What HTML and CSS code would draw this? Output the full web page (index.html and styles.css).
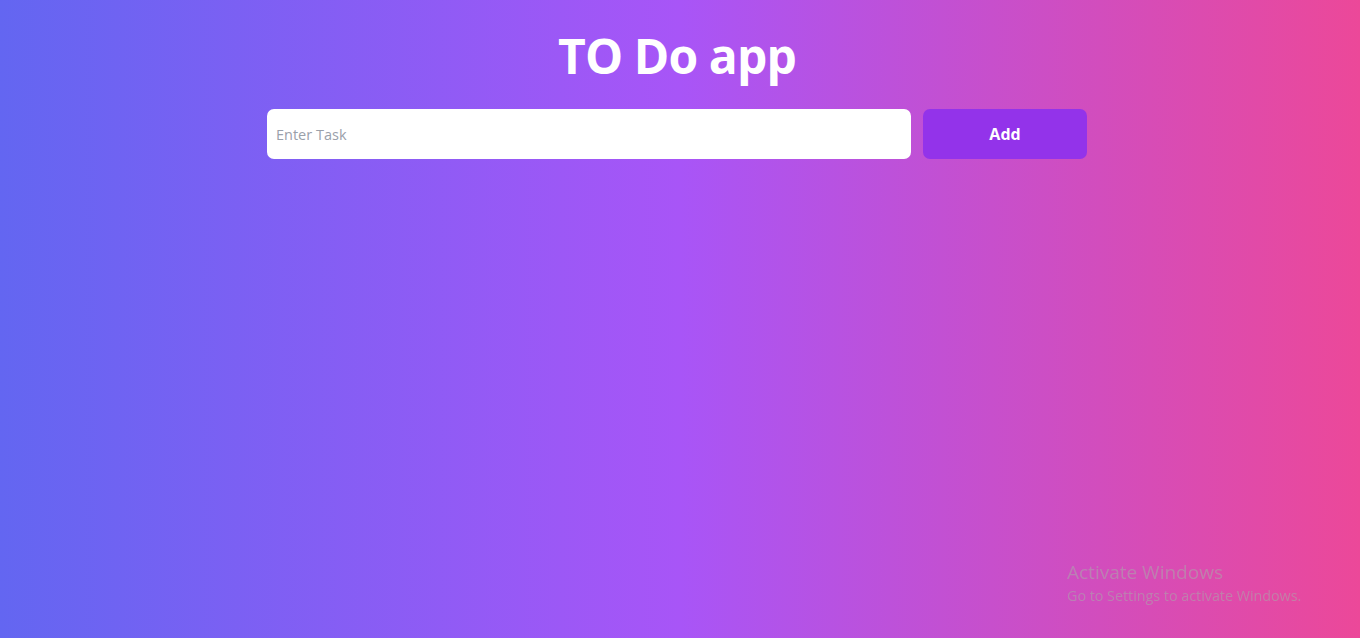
FILE: index.html
```html
<!DOCTYPE html>
<html lang="en">
<head>
<meta charset="UTF-8">
<title>TO Do app</title>
<link rel="stylesheet" href="styles.css">
</head>
<body>
<main class="app">
  <h1 class="title">TO Do app</h1>
  <form class="task-form" onsubmit="return false;">
    <input class="task-input" type="text" placeholder="Enter Task">
    <button class="add-btn" type="submit">Add</button>
  </form>
  <ul class="task-list"></ul>
</main>
<div class="watermark">
  <div class="wm-title">Activate Windows</div>
  <div class="wm-sub">Go to Settings to activate Windows.</div>
</div>
</body>
</html>
```
FILE: styles.css
```css
* { box-sizing: border-box; }
html, body { height: 100%; }
body {
  margin: 0;
  min-height: 100vh;
  background: linear-gradient(to right, #6366f1 0%, #a855f7 50%, #ec4899 100%);
  font-family: "Open Sans", "Noto Sans", Arial, sans-serif;
  color: #fff;
}
.app {
  display: flex;
  flex-direction: column;
  align-items: center;
  padding: 26px 6px 0 0;
}
.title {
  margin: 0;
  font-size: 48px;
  line-height: 60px;
  font-weight: 700;
  letter-spacing: -0.9px;
}
.task-form {
  display: flex;
  gap: 12px;
  width: 820px;
  margin-top: 23px;
}
.task-input {
  flex: 1;
  height: 50px;
  border: none;
  border-radius: 7px;
  padding: 0 9px;
  font-family: inherit;
  font-size: 14.5px;
  color: #111;
  background: #fff;
  outline: none;
}
.task-input::placeholder { color: #9aa0aa; }
.add-btn {
  width: 164px;
  height: 50px;
  border: none;
  border-radius: 7px;
  background: #9333ea;
  color: #fff;
  font-family: inherit;
  font-weight: 700;
  font-size: 16px;
  cursor: pointer;
}
.task-list { list-style: none; margin: 0; padding: 0; }
.watermark {
  position: fixed;
  left: 1067px;
  top: 561px;
  color: rgba(170, 170, 170, 0.55);
  font-family: "Open Sans", "Noto Sans", sans-serif;
  line-height: 1.2;
}
.wm-title { font-size: 19px; }
.wm-sub { font-size: 14.3px; margin-top: 3px; }
```
